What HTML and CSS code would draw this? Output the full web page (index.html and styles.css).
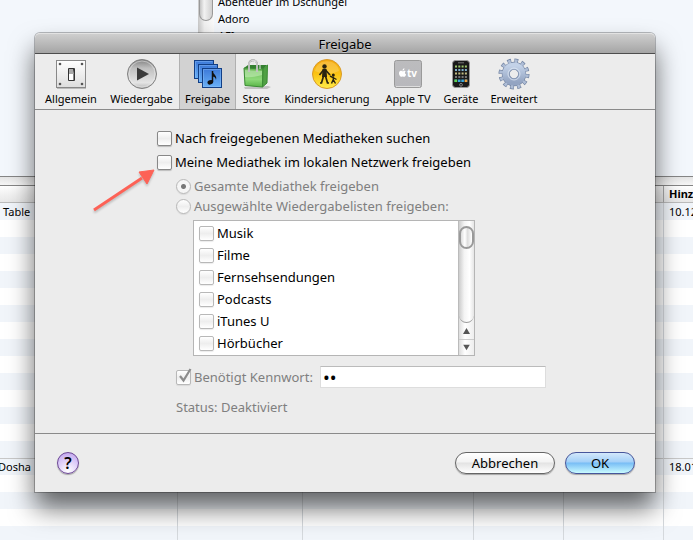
FILE: index.html
```html
<!DOCTYPE html>
<html lang="de">
<head>
<meta charset="utf-8">
<title>Freigabe</title>
<link rel="stylesheet" href="styles.css">
</head>
<body>
<div class="app">
  <div class="browser">
    <div class="pane"></div>
    <div class="track"><div class="track-thumb"></div></div>
    <ul class="artists">
      <li>Abenteuer Im Dschungel</li>
      <li>Adoro</li>
      <li>AFI</li>
    </ul>
  </div>
  <div class="splitter"></div>
  <table class="songs">
    <colgroup><col class="c-name"><col class="c-time"><col class="c-artist"><col class="c-album"><col class="c-genre"><col></colgroup>
    <thead><tr><th></th><th></th><th></th><th></th><th></th><th>Hinzugefügt</th></tr></thead>
    <tbody>
      <tr><td>Table</td><td></td><td></td><td></td><td></td><td>10.12.2009</td></tr>
      <tr><td></td><td></td><td></td><td></td><td></td><td></td></tr>
      <tr><td></td><td></td><td></td><td></td><td></td><td></td></tr>
      <tr><td></td><td></td><td></td><td></td><td></td><td></td></tr>
      <tr><td></td><td></td><td></td><td></td><td></td><td></td></tr>
      <tr><td></td><td></td><td></td><td></td><td></td><td></td></tr>
      <tr><td></td><td></td><td></td><td></td><td></td><td></td></tr>
      <tr><td></td><td></td><td></td><td></td><td></td><td></td></tr>
      <tr><td></td><td></td><td></td><td></td><td></td><td></td></tr>
      <tr><td></td><td></td><td></td><td></td><td></td><td></td></tr>
      <tr><td></td><td></td><td></td><td></td><td></td><td></td></tr>
      <tr><td></td><td></td><td></td><td></td><td></td><td></td></tr>
      <tr><td></td><td></td><td></td><td></td><td></td><td></td></tr>
      <tr><td></td><td></td><td></td><td></td><td></td><td></td></tr>
      <tr><td></td><td></td><td></td><td></td><td></td><td></td></tr>
    </tbody>
    <tbody>
      <tr class="group-start"><td class="scrolled">Dosha</td><td></td><td></td><td></td><td></td><td>18.01.2010</td></tr>
      <tr><td></td><td></td><td></td><td></td><td></td><td></td></tr>
      <tr><td></td><td></td><td></td><td></td><td></td><td></td></tr>
      <tr><td></td><td></td><td></td><td></td><td></td><td></td></tr>
      <tr><td></td><td></td><td></td><td></td><td></td><td></td></tr>
    </tbody>
  </table>
</div>

<form class="dialog" role="dialog" aria-labelledby="title">
  <h1 class="titlebar" id="title">Freigabe</h1>
  <nav class="toolbar">
    <button type="button" class="tool">
      <svg class="icon" viewBox="0 0 32 32">
        <defs><linearGradient id="plate" x2="0" y2="1"><stop offset="0" stop-color="#fff"/><stop offset="1" stop-color="#ddd"/></linearGradient></defs>
        <rect x="1.500" y="2.500" width="29" height="27" fill="url(#plate)" stroke="#888"/>
        <path d="M2 30.500h29" stroke="#bbb"/>
        <g fill="#555"><circle cx="5" cy="6" r="1.300"/><circle cx="27" cy="6" r="1.300"/><circle cx="5" cy="26" r="1.300"/><circle cx="27" cy="26" r="1.300"/></g>
        <rect x="13" y="10" width="7" height="13" rx="1" fill="#333"/>
        <path d="M14 11h4l1 5h-5z" fill="#aaa"/><path d="M14 16h4v6h-4z" fill="#fff"/><path d="M18 16h1v6h-1z" fill="#888"/>
      </svg>
      <span>Allgemein</span>
    </button>
    <button type="button" class="tool">
      <svg class="icon" viewBox="0 0 32 32">
        <defs><linearGradient id="disc" x2="0" y2="1"><stop offset="0" stop-color="#808080"/><stop offset=".3" stop-color="#bfbfbf"/><stop offset=".8" stop-color="#e4e4e4"/><stop offset="1" stop-color="#b5b5b5"/></linearGradient></defs>
        <circle cx="16" cy="16" r="14.500" fill="url(#disc)" stroke="#808080"/>
        <circle cx="16" cy="16" r="13" fill="none" stroke="#eee" stroke-opacity=".5"/>
        <path d="M11 9.500v13L23 16z" fill="#3a3a3a"/>
      </svg>
      <span>Wiedergabe</span>
    </button>
    <button type="button" class="tool selected" aria-current="page">
      <svg class="icon" viewBox="0 0 32 32">
        <defs><linearGradient id="blue" x2="0" y2="1"><stop offset="0" stop-color="#3c78d8"/><stop offset="1" stop-color="#69b1f7"/></linearGradient></defs>
        <g fill="url(#blue)" stroke="#123f86"><rect x="2.500" y="2.500" width="19" height="18"/><rect x="6.500" y="6.500" width="19" height="18"/><rect x="10.500" y="10.500" width="19" height="19"/></g>
        <g fill="none" stroke="#8ec2f8" stroke-opacity=".45"><path d="M3.500 19.500v-16h17M7.500 23.500v-16h17"/><rect x="11.500" y="11.500" width="17" height="17"/></g>
        <path d="M20.500 13v11" stroke="#111" stroke-width="1.500"/><path d="M20.500 13c.5 3.500 5 4 3.500 9-.5-3-2-3.500-3.500-3.500z" fill="#111"/><ellipse cx="18.300" cy="24.300" rx="2.900" ry="2.200" fill="#111" transform="rotate(-20 18.300 24.300)"/>
      </svg>
      <span>Freigabe</span>
    </button>
    <button type="button" class="tool">
      <svg class="icon" viewBox="0 0 32 32">
        <defs><linearGradient id="bag" x2="0" y2="1"><stop offset="0" stop-color="#68b454"/><stop offset=".6" stop-color="#8dd979"/><stop offset="1" stop-color="#58b446"/></linearGradient></defs>
        <path d="M4 29l24-1 3 1-4 2H5z" fill="#000" opacity=".18"/>
        <path d="M4 10l4-3h19l-4 4z" fill="#347f30"/>
        <path d="M4 10l19 1-.5 18L5 27.500z" fill="url(#bag)" stroke="#3b8b34"/>
        <path d="M23 11l4.500-4-.5 18-4.500 4z" fill="#4fa043" stroke="#3b8b34"/>
        <path d="M5 12l17 1v4Q12 20 5 19z" fill="#c9efbd" opacity=".55"/>
        <path d="M9 14V6c0-5 8-5 8 0v8" fill="none" stroke="#999" stroke-width="1.800"/><path d="M9 14V6c0-5 8-5 8 0v8M13 7c0-6 7-5 7 0v4" fill="none" stroke="#e5e5e5"/>
      </svg>
      <span>Store</span>
    </button>
    <button type="button" class="tool">
      <svg class="icon" viewBox="0 0 32 32">
        <defs><linearGradient id="gold" x2="0" y2="1"><stop offset="0" stop-color="#f5a80c"/><stop offset=".5" stop-color="#fbc313"/><stop offset="1" stop-color="#ffed4a"/></linearGradient></defs>
        <circle cx="16" cy="16" r="14.500" fill="url(#gold)" stroke="#d9992a"/>
        <path d="M4 13C6 0 26 0 28 13Q16 19 4 13" fill="#fff" opacity=".18"/>
        <circle cx="13.500" cy="8.500" r="2.200" fill="#2a2410"/>
        <path d="M12.500 12l-4 5M14.500 12l4.500 5M12.500 18l-2 7H9M14.500 18l2 7H18" fill="none" stroke="#2a2410" stroke-width="1.700"/>
        <path d="M11.500 11h4l.5 8h-5z" fill="#2a2410"/>
        <circle cx="22.300" cy="17" r="1.500" fill="#2a2410"/>
        <path d="M22.300 18.500v4M19 18l3 1.500 3.500 2M22 22l-1.500 3.500M22.500 22l2 3.500" fill="none" stroke="#2a2410" stroke-width="1.400"/>
      </svg>
      <span>Kindersicherung</span>
    </button>
    <button type="button" class="tool">
      <svg class="icon" viewBox="0 0 32 32">
        <defs><linearGradient id="box" x2="0" y2="1"><stop offset="0" stop-color="#bcbcbe"/><stop offset="1" stop-color="#b8b8bc"/></linearGradient></defs>
        <rect x="2.500" y="2.500" width="27" height="27" rx="2" fill="url(#box)" stroke="#9a9a9a"/>
        <path d="M4 28.500h24" stroke="#ddd"/>
        <path d="M11.500 13.200c.8-.5 1.500-.5 2.200.1-1.200.9-.9 2.500.4 3.100-.5 1.300-1.200 2.400-2 2.400-.7 0-.8-.4-1.500-.4s-.9.400-1.500.4c-1.300-.1-2.600-3-1.900-4.700.7-1.600 2.200-1.400 3-.9.400 0 .8.200 1.300 0zm-1-.5c0-1.300.8-2.300 1.900-2.500.1 1.300-.7 2.400-1.900 2.500z" fill="#fff"/>
        <text x="15" y="19" class="tv">tv</text>
      </svg>
      <span>Apple TV</span>
    </button>
    <button type="button" class="tool">
      <svg class="icon" viewBox="0 0 32 32">
        <rect x="7.500" y="2.500" width="17" height="27" rx="3" fill="#1a1a1a" stroke="#999"/>
        <path d="M13 4.800h6" stroke="#777"/>
        <g stroke-width="2" stroke-dasharray="2 1.300" fill="none"><path d="M10 8.500h12" stroke="#9bc56b"/><path d="M10 12h12" stroke="#80afcd"/><path d="M10 15.500h12" stroke="#c1bb82"/><path d="M10 19h12" stroke="#777"/></g>
        <path d="M9.500 22.800h13" stroke="#38a8dd" stroke-width="2.500" stroke-dasharray="2.600 .8"/><path d="M9.500 22.800h2.600" stroke="#60d34b" stroke-width="2.500"/><path d="M19.700 22.800h2.600" stroke="#ed9f3b" stroke-width="2.500"/>
        <circle cx="16" cy="26.800" r="1.400" fill="none" stroke="#999" stroke-width=".8"/>
      </svg>
      <span>Geräte</span>
    </button>
    <button type="button" class="tool">
      <svg class="icon" viewBox="0 0 32 32">
        <defs><linearGradient id="gear" x2="0" y2="1"><stop offset="0" stop-color="#c3d2e8"/><stop offset="1" stop-color="#93a4c2"/></linearGradient></defs>
        <circle cx="16" cy="16" r="13.500" fill="none" stroke="#7283a1" stroke-width="4" stroke-dasharray="3.800 3.269"/>
        <circle cx="16" cy="16" r="8.200" fill="none" stroke="#7283a1" stroke-width="8"/>
        <circle cx="16" cy="16" r="13" fill="none" stroke="#aebdd6" stroke-width="3.600" stroke-dasharray="2.600 4.207" stroke-dashoffset="-.5"/>
        <circle cx="16" cy="16" r="8.200" fill="none" stroke="url(#gear)" stroke-width="6.800"/>
        <circle cx="16" cy="16" r="6" fill="none" stroke="#e3ebf6" stroke-opacity=".7"/>
      </svg>
      <span>Erweitert</span>
    </button>
  </nav>

  <div class="content">
    <div class="row main"><input type="checkbox" id="search"><label for="search">Nach freigegebenen Mediatheken suchen</label></div>
    <div class="row main"><input type="checkbox" id="share"><label for="share">Meine Mediathek im lokalen Netzwerk freigeben</label></div>
    <div class="options">
      <div class="row choice"><input type="radio" name="scope" id="all" checked disabled><label for="all">Gesamte Mediathek freigeben</label></div>
      <div class="row choice"><input type="radio" name="scope" id="some" disabled><label for="some">Ausgewählte Wiedergabelisten freigeben:</label></div>
      <div class="listbox">
        <div class="playlists">
          <div class="row item"><input type="checkbox" id="p1" disabled><label for="p1">Musik</label></div>
          <div class="row item"><input type="checkbox" id="p2" disabled><label for="p2">Filme</label></div>
          <div class="row item"><input type="checkbox" id="p3" disabled><label for="p3">Fernsehsendungen</label></div>
          <div class="row item"><input type="checkbox" id="p4" disabled><label for="p4">Podcasts</label></div>
          <div class="row item"><input type="checkbox" id="p5" disabled><label for="p5">iTunes U</label></div>
          <div class="row item"><input type="checkbox" id="p6" disabled><label for="p6">Hörbücher</label></div>
        </div>
        <div class="scrollbar">
          <div class="groove"><div class="thumb"></div></div>
          <svg class="arrow" viewBox="0 0 14 16"><path d="M3.500 11L7 5l3.500 6z" fill="#555"/></svg>
          <svg class="arrow down" viewBox="0 0 14 16"><path d="M3.500 5L7 11l3.500-6z" fill="#555"/></svg>
        </div>
      </div>
      <div class="row password">
        <span class="ticked"><input type="checkbox" id="need" checked disabled><svg class="tick" viewBox="0 0 16 17"><path d="M4 8l3.500 4.500L14.500 1" fill="none" stroke="#8c8c8c" stroke-width="2.200"/></svg></span>
        <label for="need">Benötigt Kennwort:</label>
        <input type="password" class="field" value="ab" aria-label="Kennwort">
      </div>
      <p class="status">Status: Deaktiviert</p>
    </div>
  </div>

  <div class="footer">
    <button type="button" class="help" aria-label="Hilfe">?</button>
    <button type="button" class="push cancel">Abbrechen</button>
    <button type="submit" class="push ok">OK</button>
  </div>

  <svg class="pointer" viewBox="0 0 70 50"><path d="M4 43L52 11" stroke="#fd6256" stroke-width="3"/><path d="M64 3L49 5l8 12z" fill="#fd6256" stroke="#fd6256"/></svg>
</form>
</body>
</html>
```

FILE: styles.css
```css
* { box-sizing: border-box; }

body {
  margin: 0;
  height: 100vh;
  overflow: hidden;
  position: relative;
  background: #fff;
  color: #000;
  font: 13px/18px "Noto Sans", "Open Sans", sans-serif;
}

button, input { font: inherit; margin: 0; }

/* Library window */
.app { height: 100%; overflow: hidden; font-size: 11px; line-height: 17px; }
.browser { display: flex; height: 176px; overflow: hidden; background: #f3f7fc; }
.pane { flex: 0 0 198px; }
.track { flex: 0 0 16px; background: linear-gradient(90deg, #c8c8c8, #f0f0f0 40%, #fafafa); }
.track-thumb {
  height: 21px;
  margin: 0 1px;
  border: 1px solid #999;
  border-top: 0;
  border-radius: 0 0 8px 8px;
  background: linear-gradient(90deg, #c4c4c4, #f2f2f2 35%, #cfcfcf);
}
.artists { list-style: none; margin: -7px 0 0; padding: 0 0 0 4px; }
.splitter {
  height: 10px;
  border-top: 1px solid #858585;
  border-bottom: 1px solid #858585;
  background: linear-gradient(#e4e4e4, #f6f6f6);
}
.songs { width: 100%; table-layout: fixed; border-collapse: separate; border-spacing: 0; }
.c-name { width: 178px; }
.c-time { width: 125px; }
.c-artist { width: 171px; }
.c-album { width: 90px; }
.c-genre { width: 100px; }
.songs th, .songs td {
  height: 17px;
  padding: 0 0 0 5px;
  overflow: hidden;
  white-space: nowrap;
  text-align: left;
  border-right: 1px solid #d5d9dd;
}
.songs th:last-child, .songs td:last-child { border-right: 0; }
.songs td:first-child { padding-left: 3px; }
.songs .scrolled { text-indent: -5px; }
.songs th { border-bottom: 1px solid #bbb; border-right-color: #aaa; background: linear-gradient(#fff, #f2f2f2 50%, #e8e8e8); line-height: 16px; }
.songs tbody tr:nth-child(odd) { background: #f1f5fa; }
.songs .group-start td { border-top: 1px solid #c8c8c8; line-height: 16px; }

/* Preferences dialog */
.dialog {
  position: absolute;
  top: 33px;
  left: 35px;
  right: 38px;
  background: #ececec;
  border-radius: 5px 5px 0 0;
  box-shadow: 0 0 0 1px rgba(0, 0, 0, .25), 0 16px 26px rgba(0, 0, 0, .6);
}
.titlebar {
  margin: 0;
  height: 21px;
  border-top: 1px solid #e2e2e2;
  border-bottom: 1px solid #4d4d4d;
  border-radius: 5px 5px 0 0;
  background: linear-gradient(#cecece, #a5a5a5);
  font-size: 13px;
  line-height: 20px;
  font-weight: 400;
  text-align: center;
  text-shadow: 0 1px 0 rgba(255, 255, 255, .35);
}
.toolbar {
  display: grid;
  grid-template-columns: 66px 75px 57px 40px 102px 60px 46px 60px;
  height: 56px;
  padding-left: 3px;
  border-bottom: 1px solid #8a8a8a;
}
.tool {
  display: flex;
  flex-direction: column;
  align-items: center;
  gap: 1px;
  padding: 4px 0 0;
  border: 0;
  background: none;
  color: #000;
  font-size: 11px;
  line-height: 16px;
  white-space: nowrap;
}
.tool.selected { background: #d2d2d2; border: solid #b0b0b0; border-width: 0 1px; }
.icon { width: 32px; height: 32px; flex: none; }
.tv { font: 700 10px "Open Sans", sans-serif; fill: #fff; }

.content { padding: 16px 109px 17px 122px; border-bottom: 1px solid #8a8a8a; }
.row { display: flex; align-items: center; gap: 3px; }
.row label { white-space: nowrap; }
.main { height: 24px; }
.choice { height: 20px; color: #7f7f7f; }
.options { padding: 2px 0 0 19px; }

input[type="checkbox"], input[type="radio"] {
  appearance: none;
  flex: none;
  width: 15px;
  height: 15px;
  border: 1px solid #888;
  border-radius: 2px;
  background: linear-gradient(#fff, #eee 50%, #fff);
  box-shadow: 0 1px 1px rgba(0, 0, 0, .2);
}
input[type="radio"] { border-radius: 50%; }
input[type="checkbox"]:disabled, input[type="radio"]:disabled { border-color: #b8b8b8; box-shadow: 0 1px 1px rgba(0, 0, 0, .08); }
input[type="radio"]:checked { background: radial-gradient(circle, #777 2px, #f5f5f5 3px); }

.listbox {
  display: flex;
  width: 282px;
  margin: 4px 0 0 17px;
  border: 1px solid #b5b5b5;
  background: #fff;
}
.playlists { flex: 1; padding: 1px 0 1px 5px; }
.item { height: 22px; }
.scrollbar {
  display: flex;
  flex-direction: column;
  width: 16px;
  border-left: 1px solid #bbb;
  background: linear-gradient(90deg, #ddd, #fff 40%, #eee);
}
.groove {
  flex: 1;
  padding-top: 5px;
  border-radius: 0 0 8px 8px;
  border-bottom: 1px solid #999;
  background: linear-gradient(90deg, #ccc, #f4f4f4 35%, #fff 70%, #e5e5e5);
}
.thumb {
  height: 23px;
  border: 2px solid #999;
  border-radius: 8px;
  background: linear-gradient(90deg, #ddd, #fff 35%, #ddd 60%, #fff);
}
.arrow { width: 15px; height: 16px; flex: none; }
.arrow.down { border-top: 1px solid #ccc; }

.password { height: 22px; margin-top: 10px; color: #7f7f7f; }
.ticked { position: relative; display: flex; }
.tick { position: absolute; left: 0; bottom: 0; width: 16px; height: 17px; }
.field {
  flex: 1;
  min-width: 0;
  height: 22px;
  margin-left: 4px;
  padding: 0 2px;
  border: 1px solid #ddd;
  border-top-color: #bbb;
  background: #fff;
  color: #000;
  font-size: 18px;
}
.status { margin: 10px 0 0; color: #7f7f7f; }

.footer { display: flex; align-items: center; gap: 10px; height: 58px; padding: 0 20px 0 22px; }
.help {
  width: 22px;
  height: 22px;
  margin-right: auto;
  padding: 0;
  border: 1px solid #6d4896;
  border-radius: 50%;
  background: radial-gradient(circle at 50% 90%, #fff, #d9c6f8 60%, #b99be8);
  box-shadow: 0 1px 1px rgba(0, 0, 0, .3);
  font-size: 16px;
  font-weight: 600;
  line-height: 19px;
}
.push {
  height: 22px;
  padding: 0;
  border: 1px solid #666;
  border-radius: 11px;
  background: linear-gradient(#fff, #f3f3f3 45%, #e3e3e3 50%, #fff);
  box-shadow: 0 1px 1px rgba(0, 0, 0, .3);
  color: #000;
  line-height: 19px;
}
.cancel { width: 100px; }
.ok {
  width: 70px;
  border-color: #47569b;
  background: linear-gradient(#d3e8fb, #a3d0f8 45%, #78bdf5 50%, #c9fbff);
}

.pointer { position: absolute; left: 55px; top: 134px; width: 70px; height: 50px; filter: drop-shadow(0 2px 1px rgba(0, 0, 0, .2)); pointer-events: none; }
```
